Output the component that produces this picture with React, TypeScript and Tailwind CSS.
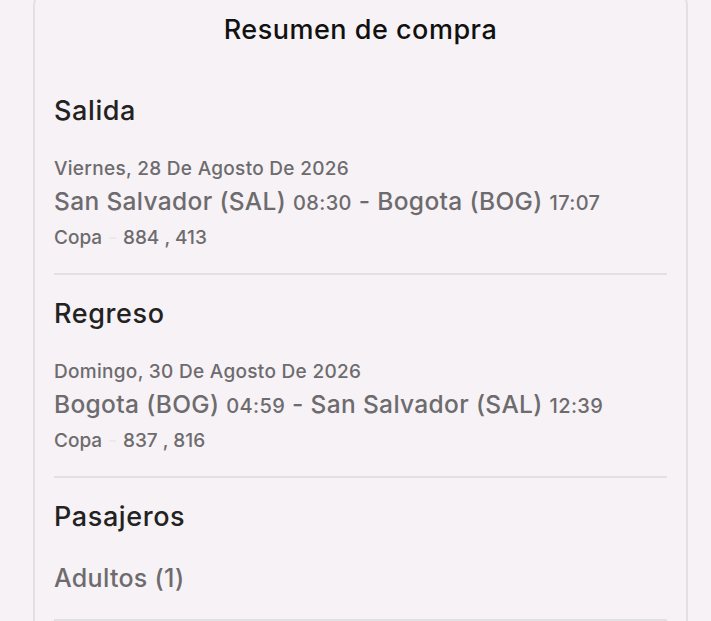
// Purchase summary card

const FONT = "font-['Inter','Liberation_Sans',sans-serif]"

type Leg = {
  title: string
  date: string
  from: string
  fromTime: string
  to: string
  toTime: string
  airline: string
  flights: string
}

const legs: Leg[] = [
  {
    title: 'Salida',
    date: 'Viernes, 28 De Agosto De 2026',
    from: 'San Salvador (SAL)',
    fromTime: '08:30',
    to: 'Bogota (BOG)',
    toTime: '17:07',
    airline: 'Copa',
    flights: '884 , 413',
  },
  {
    title: 'Regreso',
    date: 'Domingo, 30 De Agosto De 2026',
    from: 'Bogota (BOG)',
    fromTime: '04:59',
    to: 'San Salvador (SAL)',
    toTime: '12:39',
    airline: 'Copa',
    flights: '837 , 816',
  },
]

function LegSection({ leg }: { leg: Leg }) {
  return (
    <div className="border-b-2 border-[#e3e0e3] pb-[23px]">
      <h3 className="text-[27px] leading-[30px] font-medium tracking-[0.6px] text-[#222]">{leg.title}</h3>
      <p className="mt-[31px] text-[19px] leading-[24px] font-medium tracking-[0.3px] text-[#6d6b6e]">{leg.date}</p>
      <p className="mt-[5px] text-[24.5px] leading-[30px] font-medium tracking-[0.35px] text-[#6d6b6e]">
        {leg.from} <span className="text-[20px]">{leg.fromTime}</span> - {leg.to}{' '}
        <span className="text-[20px]">{leg.toTime}</span>
      </p>
      <p className="mt-[8px] text-[19px] leading-[24px] font-medium text-[#6d6b6e]">
        {leg.airline}
        <span className="mx-[6px] text-[#ebe8eb]">-</span>
        {leg.flights}
      </p>
    </div>
  )
}

export default function App() {
  return (
    <div className={`min-h-screen bg-[#f6f2f5] pl-[33px] pr-[23px] ${FONT}`}>
      <div className="-mt-[12px] rounded-[18px] border-2 border-[#e3e0e3] bg-[#f6f2f5] px-[19px]">
        {/* Header */}
        <h2 className="pt-[24px] text-center text-[27px] leading-[32px] font-medium tracking-[0.5px] text-[#111]">
          Resumen de compra
        </h2>

        <div className="mt-[50px] flex flex-col gap-[24px]">
          {legs.map((leg) => (
            <LegSection key={leg.title} leg={leg} />
          ))}

          {/* Passengers */}
          <div className="border-b-2 border-[#e3e0e3] pb-[26px]">
            <h3 className="text-[27px] leading-[30px] font-medium tracking-[0.6px] text-[#222]">Pasajeros</h3>
            <p className="mt-[31px] text-[25px] leading-[30px] font-medium tracking-[0.3px] text-[#6d6b6e]">
              Adultos (1)
            </p>
          </div>
        </div>
        <div className="h-[40px]" />
      </div>
    </div>
  )
}
